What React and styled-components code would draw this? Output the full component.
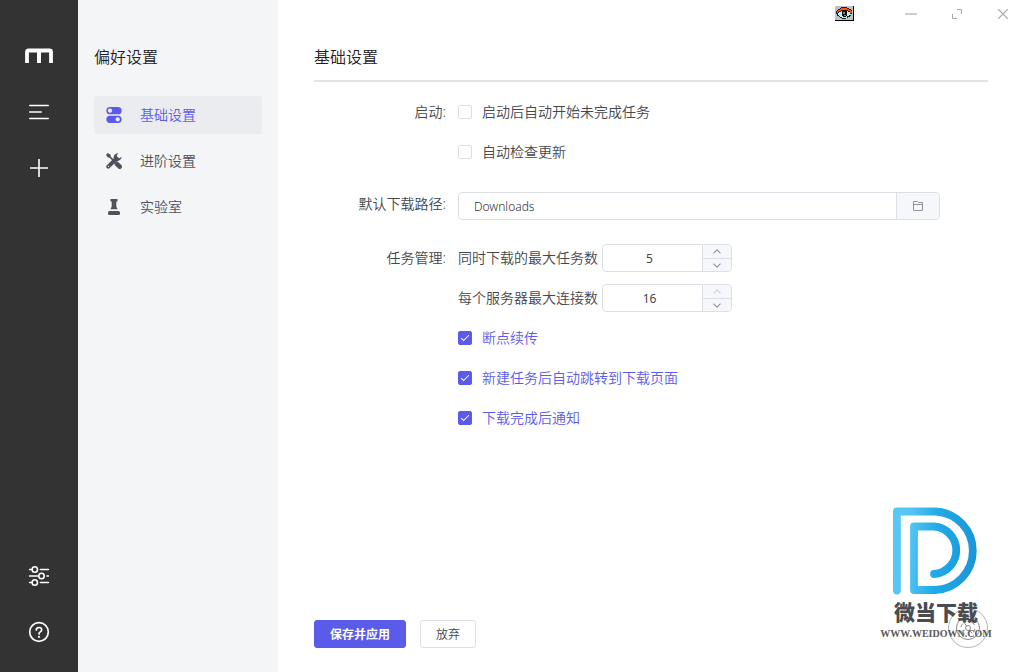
import React, { useState } from "react";
import styled, { createGlobalStyle, css } from "styled-components";

const GlobalStyle = createGlobalStyle`
  *, *::before, *::after { box-sizing: border-box; }
  body {
    margin: 0;
    background: #fff;
    color: #44474d;
    font: 14px/28px "Noto Sans", "Noto Sans CJK SC", sans-serif;
  }
  button, input { font-family: inherit; color: inherit; margin: 0; }
  h1, h2 { margin: 0; font-weight: 350; }
`;

const Shell = styled.div`
  position: relative;
  display: grid;
  grid-template-columns: 78px 200px minmax(0, 1fr);
  min-height: 100vh;
  font-weight: 350;
`;

const Rail = styled.aside`
  display: flex;
  flex-direction: column;
  align-items: center;
  gap: 32px;
  padding: 44px 0 28px;
  background: #333;
  color: #fff;
`;

const RailSpacer = styled.div`
  flex: 1;
`;

const IconButton = styled.button`
  display: grid;
  place-items: center;
  width: ${(p) => p.$width || 24}px;
  height: ${(p) => p.$height || 24}px;
  padding: 0;
  border: 0;
  background: transparent;
  color: inherit;
  cursor: pointer;
`;

const LogoLink = styled.a`
  display: grid;
  place-items: center;
  height: 24px;
  color: inherit;
`;

const SubNav = styled.nav`
  padding: 44px 16px 0;
  background: #f4f5f7;
`;

const Title = styled.h1`
  font-size: 16px;
  line-height: 26px;
  color: #1f2023;
`;

const NavList = styled.ul`
  display: flex;
  flex-direction: column;
  gap: 8px;
  margin: 26px 0 0;
  padding: 0;
  list-style: none;
`;

const NavLink = styled.a`
  display: flex;
  align-items: center;
  gap: 18px;
  height: 38px;
  padding: 0 12px;
  border-radius: 3px;
  text-decoration: none;
  color: ${(p) => (p.$active ? "#5b5bea" : "#4d515a")};
  background: ${(p) => (p.$active ? "#eaecf0" : "transparent")};
`;

const Main = styled.main`
  display: flex;
  flex-direction: column;
`;

const WindowBar = styled.div`
  display: flex;
  justify-content: flex-end;
  align-items: center;
  gap: 4px;
  height: 28px;
  color: #a6a6a6;
`;

const TrayIcon = styled.span`
  display: flex;
  margin-right: 32px;
`;

const PanelHeader = styled.header`
  margin: 16px 36px 0;
  padding-bottom: 10px;
  border-bottom: 2px solid #e4e4e4;
`;

const Form = styled.form`
  display: flex;
  flex: 1;
  flex-direction: column;
  gap: 24px;
  padding: 16px 36px 24px;
`;

const Group = styled.div`
  display: grid;
  grid-template-columns: 144px minmax(0, 1fr);
  padding-right: 48px;
`;

const GroupLabel = styled.div`
  padding-right: 12px;
  text-align: right;
`;

const Stack = styled.div`
  display: flex;
  flex-direction: column;
  gap: 12px;
`;

const Check = styled.label`
  display: flex;
  align-items: center;
  gap: 10px;
  height: 28px;
  cursor: pointer;
  color: ${(p) => (p.$on ? "#5b5bea" : "inherit")};
`;

const CheckBox = styled.input`
  position: relative;
  appearance: none;
  width: 14px;
  height: 14px;
  border: 1px solid #dcdfe6;
  border-radius: 2px;
  background: #fff;
  &:checked {
    border-color: #5b5bea;
    background: #5b5bea;
  }
  &:checked::after {
    content: "";
    position: absolute;
    left: 4px;
    top: 1px;
    width: 4px;
    height: 8px;
    border: solid #fff;
    border-width: 0 1px 1px 0;
    transform: rotate(45deg);
  }
`;

const framed = css`
  display: flex;
  height: 28px;
  border: 1px solid #dcdfe6;
  border-radius: 4px;
  overflow: hidden;
  background: #fff;
`;

const PathField = styled.div`
  ${framed}
  margin-top: 2px;
`;

const PathInput = styled.input`
  flex: 1;
  min-width: 0;
  padding: 0 15px;
  border: 0;
  outline: 0;
  background: transparent;
  color: #2f3136;
  font-size: 12px;
  font-weight: 350;
`;

const BrowseButton = styled.button`
  display: grid;
  place-items: center;
  width: 43px;
  padding: 0;
  border: 0;
  border-left: 1px solid #dcdfe6;
  background: #f5f7fa;
  color: #909399;
`;

const NumberRow = styled.div`
  display: flex;
  gap: 4px;
`;

const Stepper = styled.div`
  ${framed}
  width: 130px;
`;

const StepInput = styled.input`
  flex: 1;
  min-width: 0;
  padding: 0 6px 0 0;
  border: 0;
  outline: 0;
  background: transparent;
  font-size: 12px;
  font-weight: 400;
  text-align: center;
  appearance: textfield;
  &::-webkit-inner-spin-button { appearance: none; margin: 0; }
`;

const StepButtons = styled.div`
  display: grid;
  grid-template-rows: 1fr 1fr;
  width: 29px;
  border-left: 1px solid #dcdfe6;
`;

const StepButton = styled.button`
  display: grid;
  place-items: center;
  padding: 0;
  border: 0;
  background: #f5f7fa;
  color: #909399;
  & + & { border-top: 1px solid #dcdfe6; }
  &:disabled { color: #cdd0d6; }
`;

const Actions = styled.div`
  display: flex;
  gap: 14px;
  margin-top: auto;
`;

const Button = styled.button`
  height: 28px;
  padding: 1px 15px 0;
  border: 1px solid ${(p) => (p.$primary ? "#5b5bea" : "#dcdfe6")};
  border-radius: 3px;
  background: ${(p) => (p.$primary ? "#5b5bea" : "#fff")};
  color: ${(p) => (p.$primary ? "#fff" : "#44474d")};
  font-size: 12px;
  line-height: 24px;
  font-weight: ${(p) => (p.$primary ? 700 : 350)};
`;

const SpeedDial = styled.button`
  position: absolute;
  right: 36px;
  bottom: 24px;
  display: grid;
  place-items: center;
  width: 40px;
  height: 40px;
  padding: 0;
  border: 1px solid #b4b4b4;
  border-radius: 50%;
  background: #fff;
  color: #8a8a8a;
`;

const Watermark = styled.div`
  position: absolute;
  right: 32px;
  bottom: 30px;
  display: flex;
  flex-direction: column;
  align-items: center;
  width: 112px;
  pointer-events: none;
`;

const WatermarkName = styled.div`
  margin: 4px 0 3px;
  font: 900 21px/24px "Noto Sans CJK SC", sans-serif;
  color: #4a4c50;
`;

const WatermarkSite = styled.div`
  font: 700 10px/16px "Liberation Serif", serif;
  color: #5a5a5a;
`;

const MotrixLogo = () => (
  <svg width="28" height="16" viewBox="0 0 28 16" fill="none" stroke="#fff">
    <path d="M2 15V4Q2 2.500 3.500 2.500H24.500Q26 2.500 26 4V15" strokeWidth="3.800" strokeLinejoin="round" />
    <path d="M14 3V15" strokeWidth="4" />
  </svg>
);

const TaskIcon = () => (
  <svg width="24" height="24" viewBox="0 0 24 24" fill="none" stroke="currentColor" strokeWidth="1.600" strokeLinecap="round">
    <path d="M2.800 5.500H21.200M2.800 12H14.200M2.800 18.500H21.200" />
  </svg>
);

const PlusIcon = () => (
  <svg width="24" height="24" viewBox="0 0 24 24" fill="none" stroke="currentColor" strokeWidth="1.600">
    <path d="M12 3V21M3 12H21" />
  </svg>
);

const SlidersIcon = () => (
  <svg width="24" height="24" viewBox="0 0 24 24" fill="none" stroke="currentColor" strokeWidth="1.600" strokeLinecap="round">
    <path d="M2.600 5.500H4.800M13.500 5.500H21.400M2.600 12H11.500M20 12H21.400M2.600 18.500H4.800M13.500 18.500H21.400" />
    <circle cx="7.800" cy="5.500" r="2.700" />
    <circle cx="14.500" cy="12" r="2.700" />
    <circle cx="7.800" cy="18.500" r="2.700" />
  </svg>
);

const HelpIcon = () => (
  <svg width="24" height="24" viewBox="0 0 24 24" fill="none" stroke="currentColor" strokeWidth="1.700" strokeLinecap="round">
    <circle cx="12" cy="12" r="9.300" />
    <path d="M9.300 10Q9.300 7.500 12 7.500T14.700 9.800Q14.700 11 13.300 11.900T12 14" />
    <path d="M12 16.800V16.900" strokeWidth="2" />
  </svg>
);

const ToggleIcon = () => (
  <svg width="16" height="16" viewBox="0 0 16 16" fill="currentColor" fillRule="evenodd">
    <path d="M4 0H12A3.500 3.500 0 0 1 12 7.300H4A3.500 3.500 0 0 1 4 0ZM4 1.500A2.100 2.100 0 1 0 4 5.800A2.100 2.100 0 1 0 4 1.500Z" />
    <path d="M4 8.700H12A3.500 3.500 0 0 1 12 16H4A3.500 3.500 0 0 1 4 8.700ZM11.700 10.200A2.100 2.100 0 1 0 11.700 14.500A2.100 2.100 0 1 0 11.700 10.200Z" />
  </svg>
);

const ToolsIcon = () => (
  <svg width="16" height="16" viewBox="0 0 16 16" fill="none" stroke="currentColor">
    <path d="M2.500 2.500L8 8" strokeWidth="1.700" />
    <path d="M0 1.700L1.700 0L4.600 1.800V3.300L3.300 4.600H1.800Z" fill="currentColor" stroke="none" />
    <path d="M10.800 10.800L13.700 13.700" strokeWidth="4.600" strokeLinecap="round" />
    <path d="M2.300 13.700L10.500 5.500" strokeWidth="4" strokeLinecap="round" />
    <path d="M15.700 3.800A4.400 4.400 0 0 1 8 6.500A4.400 4.400 0 0 1 12.300 0.200L10.700 2.600L11.200 4.700L13.300 5.300Z" fill="currentColor" stroke="none" />
    <circle cx="2.600" cy="13.400" r="0.600" fill="#f4f5f7" stroke="none" />
  </svg>
);

const LabIcon = () => (
  <svg width="16" height="16" viewBox="0 0 16 16" fill="currentColor">
    <path d="M4.500 0H11.500V2.600H10.300V7.500L11.600 10.300H4.400L5.700 7.500V2.600H4.500Z" />
    <rect x="2" y="12" width="12" height="4" rx="1.600" />
  </svg>
);

const FolderIcon = () => (
  <svg width="12" height="12" viewBox="0 0 12 12" fill="none" stroke="currentColor">
    <path d="M1.500 10.500V1.500H5.500L6.500 2.500H10.500V10.500ZM1.500 4.500H10.500" />
  </svg>
);

const Chevron = ({ up }) => (
  <svg width="8" height="5" viewBox="0 0 8 5" fill="none" stroke="currentColor" strokeWidth="1.100">
    <path d={up ? "M0.500 4.300L4 0.800L7.500 4.300" : "M0.500 0.700L4 4.200L7.500 0.700"} />
  </svg>
);

const EyeIcon = () => (
  <svg width="19" height="16" viewBox="0 0 19 16" shapeRendering="crispEdges">
    <rect width="19" height="15" fill="#000" />
    <rect width="18" height="14" fill="#c0c0c0" />
    <path d="M1 7V5H2V4H3V3H5V2H6V1H12V2H14V3H16V4H17V8H16V10H15V11H13V12H11V13H7V12H5V11H4V10H2V8H1Z" fill="#222" />
    <path d="M2 7V5H3V4H5V3H6V2H12V3H14V4H16V5H17V7H15V5H13V4H6V5H4V6H3V7Z" fill="#f4581c" />
    <path d="M3 9V7H4V6H6V5H13V6H15V8H16V9H14V10H12V12H7V11H5V10H4V9Z" fill="#b9f5f7" />
    <path d="M7 5H8V4H11V5H12V10H11V11H8V10H7Z" fill="#111" />
    <path d="M8 6H10V8H8ZM9 9H11V10H9Z" fill="#8a8a8a" />
  </svg>
);

const DialIcon = () => (
  <svg width="26" height="26" viewBox="0 0 26 26" fill="none" stroke="currentColor" strokeWidth="1">
    <circle cx="13" cy="13" r="11.500" />
    <circle cx="13" cy="13" r="2.500" />
    <path d="M11.500 11L7.500 5.500M14.500 15L17 18.500" />
    <path d="M6.500 16A7 7 0 0 0 10 19.300M19.500 10A7 7 0 0 0 16 6.700M6 12A7 7 0 0 1 7.500 8.700M20 14A7 7 0 0 1 18.500 17.300" />
  </svg>
);

const WatermarkLogo = () => (
  <svg width="86" height="88" viewBox="0 0 86 88" fill="none">
    <defs>
      <linearGradient id="brand" gradientUnits="userSpaceOnUse" x1="0" y1="40" x2="86" y2="46">
        <stop offset="0" stopColor="#5ac8f5" />
        <stop offset="0.200" stopColor="#52c3f3" />
        <stop offset="0.500" stopColor="#20aae8" />
        <stop offset="1" stopColor="#1994d6" />
      </linearGradient>
    </defs>
    <path
      d="M3.900 83.500V4.500H42.500A39.300 39.300 0 0 1 42.500 83H21V19.500H41A23.800 23.800 0 0 1 41 67"
      stroke="url(#brand)"
      strokeWidth="7.800"
      strokeLinecap="round"
      strokeLinejoin="round"
    />
  </svg>
);

const navItems = [
  { label: "基础设置", Icon: ToggleIcon, active: true },
  { label: "进阶设置", Icon: ToolsIcon },
  { label: "实验室", Icon: LabIcon },
];

function CheckOption({ label, initial = false }) {
  const [on, setOn] = useState(initial);
  return (
    <Check $on={on}>
      <CheckBox type="checkbox" checked={on} onChange={() => setOn(!on)} />
      {label}
    </Check>
  );
}

function NumberOption({ id, label, initial, max }) {
  const [value, setValue] = useState(initial);
  return (
    <NumberRow>
      <label htmlFor={id}>{label}</label>
      <Stepper>
        <StepInput
          id={id}
          type="number"
          min={1}
          max={max}
          value={value}
          onChange={(e) => setValue(Number(e.target.value))}
        />
        <StepButtons>
          <StepButton type="button" aria-label="+" disabled={value >= max} onClick={() => setValue(value + 1)}>
            <Chevron up />
          </StepButton>
          <StepButton type="button" aria-label="-" disabled={value <= 1} onClick={() => setValue(value - 1)}>
            <Chevron />
          </StepButton>
        </StepButtons>
      </Stepper>
    </NumberRow>
  );
}

export default function App() {
  const [path, setPath] = useState("Downloads");
  return (
    <>
      <GlobalStyle />
      <Shell>
        <Rail>
          <LogoLink href="#home" aria-label="Motrix"><MotrixLogo /></LogoLink>
          <IconButton aria-label="任务"><TaskIcon /></IconButton>
          <IconButton aria-label="新建"><PlusIcon /></IconButton>
          <RailSpacer />
          <IconButton aria-label="偏好设置"><SlidersIcon /></IconButton>
          <IconButton aria-label="帮助"><HelpIcon /></IconButton>
        </Rail>

        <SubNav>
          <Title>偏好设置</Title>
          <NavList>
            {navItems.map(({ label, Icon, active }) => (
              <li key={label}>
                <NavLink href="#settings" $active={active}>
                  <Icon />
                  {label}
                </NavLink>
              </li>
            ))}
          </NavList>
        </SubNav>

        <Main>
          <WindowBar>
            <TrayIcon><EyeIcon /></TrayIcon>
            <IconButton $width={42} $height={28} aria-label="最小化">
              <svg width="12" height="12" viewBox="0 0 12 12" fill="none" stroke="#ccc" strokeWidth="2">
                <path d="M0 6H12" />
              </svg>
            </IconButton>
            <IconButton $width={42} $height={28} aria-label="最大化">
              <svg width="10" height="10" viewBox="0 0 10 10" fill="none" stroke="currentColor">
                <path d="M5 0.500H9.500V5M0.500 5V9.500H5" />
              </svg>
            </IconButton>
            <IconButton $width={42} $height={28} aria-label="关闭">
              <svg width="10" height="10" viewBox="0 0 10 10" fill="none" stroke="currentColor" strokeWidth="1.200">
                <path d="M0 0L10 10M10 0L0 10" />
              </svg>
            </IconButton>
          </WindowBar>

          <PanelHeader>
            <Title as="h2">基础设置</Title>
          </PanelHeader>

          <Form onSubmit={(e) => e.preventDefault()}>
            <Group>
              <GroupLabel>启动:</GroupLabel>
              <Stack>
                <CheckOption label="启动后自动开始未完成任务" />
                <CheckOption label="自动检查更新" />
              </Stack>
            </Group>
            <Group>
              <GroupLabel as="label" htmlFor="path">默认下载路径:</GroupLabel>
              <PathField>
                <PathInput id="path" type="text" value={path} onChange={(e) => setPath(e.target.value)} />
                <BrowseButton type="button" aria-label="浏览"><FolderIcon /></BrowseButton>
              </PathField>
            </Group>
            <Group>
              <GroupLabel>任务管理:</GroupLabel>
              <Stack>
                <NumberOption id="tasks" label="同时下载的最大任务数" initial={5} max={10} />
                <NumberOption id="connections" label="每个服务器最大连接数" initial={16} max={16} />
                <CheckOption label="断点续传" initial />
                <CheckOption label="新建任务后自动跳转到下载页面" initial />
                <CheckOption label="下载完成后通知" initial />
              </Stack>
            </Group>
            <Actions>
              <Button type="submit" $primary>保存并应用</Button>
              <Button type="button">放弃</Button>
            </Actions>
          </Form>
        </Main>

        <SpeedDial aria-label="下载速度"><DialIcon /></SpeedDial>
        <Watermark>
          <WatermarkLogo />
          <WatermarkName>微当下载</WatermarkName>
          <WatermarkSite>WWW.WEIDOWN.COM</WatermarkSite>
        </Watermark>
      </Shell>
    </>
  );
}
